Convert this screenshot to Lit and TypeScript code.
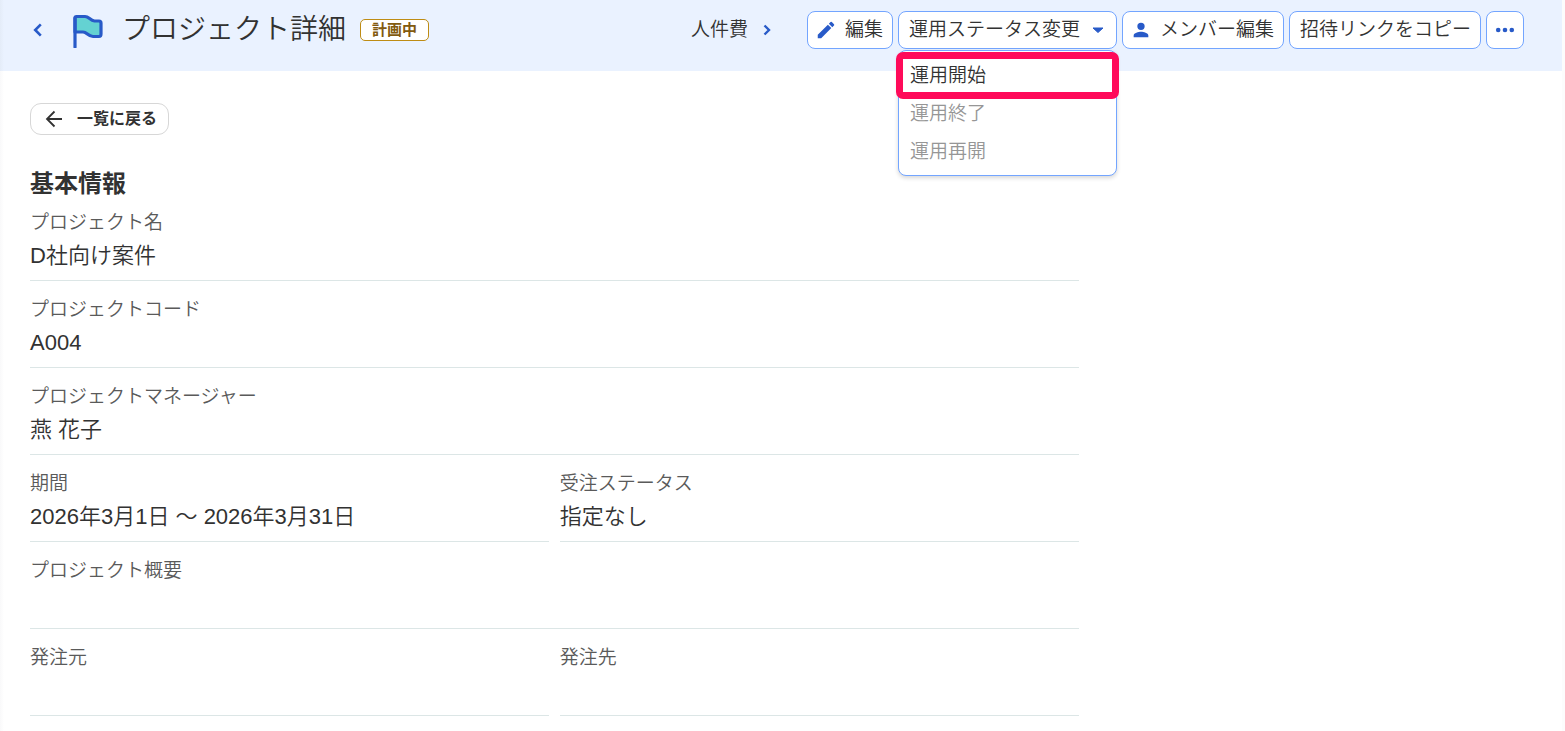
import { LitElement, html, css, svg, nothing } from "lit";
import { customElement, state } from "lit/decorators.js";

interface Field {
  label: string;
  value: string;
  half?: boolean;
}

const FIELDS: Field[] = [
  { label: "プロジェクト名", value: "D社向け案件" },
  { label: "プロジェクトコード", value: "A004" },
  { label: "プロジェクトマネージャー", value: "燕 花子" },
  { label: "期間", value: "2026年3月1日 ～ 2026年3月31日", half: true },
  { label: "受注ステータス", value: "指定なし", half: true },
  { label: "プロジェクト概要", value: "" },
  { label: "発注元", value: "", half: true },
  { label: "発注先", value: "", half: true },
];

const ACTIONS = [
  { label: "運用開始", enabled: true },
  { label: "運用終了", enabled: false },
  { label: "運用再開", enabled: false },
];

const pencil = svg`<path fill="currentColor" d="M3 17.25V21h3.75L17.81 9.94l-3.75-3.75L3 17.25zM20.71 7.04a1 1 0 0 0 0-1.41l-2.34-2.34a1 1 0 0 0-1.41 0l-1.83 1.83 3.75 3.75 1.83-1.83z"/>`;
const person = svg`<path fill="currentColor" d="M12 12a4 4 0 1 0 0-8 4 4 0 0 0 0 8zm0 2c-2.67 0-8 1.34-8 4v2h16v-2c0-2.66-5.33-4-8-4z"/>`;

@customElement("app-root")
export class AppRoot extends LitElement {
  @state() private menuOpen = true;

  static styles = css`
    :host {
      display: block;
      min-height: 100vh;
      box-sizing: border-box;
      padding-right: 3px;
      background: linear-gradient(to right, #f9f9fa, #fff 4px, #fff calc(100% - 3px), #fcfcfc calc(100% - 3px));
      color: #323232;
      font-family: "Liberation Sans", "Noto Sans CJK JP", sans-serif;
      font-size: 19px;
      line-height: 28px;
      font-weight: 350;
    }
    * {
      box-sizing: border-box;
    }
    button {
      font: inherit;
      color: inherit;
      margin: 0;
      cursor: pointer;
      white-space: nowrap;
    }
    svg {
      display: block;
      flex: none;
    }
    .header {
      display: flex;
      align-items: flex-start;
      height: 71px;
      padding: 11px 38px 0 30px;
      background: linear-gradient(to right, #e4ecf8, #eaf2ff 4px);
    }
    .brand {
      display: flex;
      align-items: center;
      height: 38px;
    }
    .collapse {
      display: flex;
      padding: 0;
      border: 0;
      background: none;
      color: #285ac8;
    }
    .flag {
      margin-left: 24px;
    }
    .title {
      margin: 0 0 0 16px;
      font-size: 28px;
      line-height: 38px;
      font-weight: 350;
      white-space: nowrap;
    }
    .badge {
      height: 22px;
      margin-left: 14px;
      padding: 0 11px;
      border: 1px solid #be8c14;
      border-radius: 5px;
      background: #fff;
      color: #825a0f;
      font-size: 15px;
      line-height: 20px;
      font-weight: 700;
      white-space: nowrap;
    }
    .actions {
      display: flex;
      align-items: center;
      gap: 5px;
      margin-left: auto;
    }
    .next {
      display: flex;
      align-items: center;
      gap: 7px;
      margin-right: 23px;
      color: inherit;
      text-decoration: none;
      white-space: nowrap;
    }
    .next svg {
      color: #285ac8;
    }
    .btn {
      display: flex;
      align-items: center;
      height: 38px;
      padding: 0 9px 0 10px;
      border: 1px solid #73a5ff;
      border-radius: 8px;
      background: #fff;
      line-height: 36px;
    }
    .btn svg {
      color: #285ac8;
    }
    .btn.icon {
      gap: 8px;
      padding: 0 9px 0 7px;
    }
    .btn.drop {
      gap: 8px;
      padding: 0 8px 0 10px;
    }
    .btn.more {
      width: 38px;
      padding: 0;
      justify-content: center;
    }
    .dropdown {
      position: relative;
    }
    .menu {
      position: absolute;
      top: 39px;
      left: 0;
      right: 0;
      margin: 0;
      padding: 6px 0 4px;
      list-style: none;
      border: 1px solid #73a5ff;
      border-radius: 8px;
      background: #fff;
      box-shadow: 0 2px 4px rgba(0, 0, 0, 0.16);
    }
    .entry {
      display: block;
      width: 100%;
      height: 38px;
      padding: 0 11px;
      border: 0;
      background: none;
      text-align: left;
    }
    .entry:disabled {
      color: #969696;
      cursor: default;
    }
    .mark {
      position: absolute;
      top: 41px;
      left: -2px;
      right: -2px;
      height: 47px;
      border: 7px solid #ff0a5a;
      border-radius: 7px;
      pointer-events: none;
    }
    .content {
      padding: 32px 34px 0 30px;
    }
    .back {
      display: flex;
      align-items: center;
      gap: 11px;
      width: max-content;
      height: 32px;
      padding: 0 11px 0 13px;
      border: 1px solid #d7d7d7;
      border-radius: 11px;
      background: #fff;
      font-size: 16px;
      font-weight: 700;
      line-height: 28px;
    }
    .heading {
      margin: 31px 0 7px;
      font-size: 24px;
      line-height: 36px;
      font-weight: 700;
    }
    .fields {
      display: grid;
      grid-template-columns: 1fr 1fr;
      column-gap: 11px;
      row-gap: 15px;
      width: 70%;
      margin: 0;
    }
    .field {
      grid-column: span 2;
      padding-bottom: 5px;
      border-bottom: 1px solid #dce6e6;
    }
    .field.half {
      grid-column: span 1;
    }
    dt {
      color: #5a5a5a;
    }
    dd {
      margin: 0;
      height: 38px;
      font-size: 22px;
      line-height: 38px;
    }
  `;

  private toggle() {
    this.menuOpen = !this.menuOpen;
  }

  render() {
    return html`
      <header class="header">
        <div class="brand">
          <button class="collapse" aria-label="戻る">
            <svg width="16" height="16" viewBox="0 0 16 16" fill="none" stroke="currentColor" stroke-width="2.6"><path d="M10.8 2.4 5.200 8l5.600 5.600" /></svg>
          </button>
          <svg class="flag" width="36" height="36" viewBox="0 0 36 36" stroke="#285ac8" stroke-width="3.2" stroke-linecap="round" stroke-linejoin="round">
            <path fill="#64d2d2" d="M5 6q0-1.500 1.500-1.500H15c4 0 5 4 9.500 4.500H29q2 0 2 2v11q0 2.500-2 2.500h-6c-5 0-6-4.500-10-4.500H5z" />
            <path fill="none" d="M5 6V35" />
          </svg>
          <h1 class="title">プロジェクト詳細</h1>
          <span class="badge">計画中</span>
        </div>
        <nav class="actions">
          <a class="next" href="#labor">
            人件費
            <svg width="24" height="24" viewBox="0 0 24 24" fill="none" stroke="currentColor" stroke-width="2.4"><path d="m9.500 7.500 4.500 4.500-4.500 4.500" /></svg>
          </a>
          <button class="btn icon"><svg width="22" height="22" viewBox="0 0 24 24">${pencil}</svg>編集</button>
          <div class="dropdown">
            <button class="btn drop" aria-expanded=${this.menuOpen} @click=${this.toggle}>
              運用ステータス変更
              <svg width="20" height="20" viewBox="0 0 20 20"><path fill="currentColor" d="M5 8h10l-5 4.500z" stroke="currentColor" stroke-width="1" stroke-linejoin="round" /></svg>
            </button>
            ${this.menuOpen
              ? html`<ul class="menu">
                    ${ACTIONS.map((a) => html`<li><button class="entry" ?disabled=${!a.enabled}>${a.label}</button></li>`)}
                  </ul>
                  <div class="mark"></div>`
              : nothing}
          </div>
          <button class="btn icon"><svg width="22" height="22" viewBox="0 0 24 24">${person}</svg>メンバー編集</button>
          <button class="btn">招待リンクをコピー</button>
          <button class="btn more" aria-label="その他">
            <svg width="20" height="6" viewBox="0 0 20 6" fill="currentColor"><circle cx="3.200" cy="3" r="2.300" /><circle cx="10" cy="3" r="2.300" /><circle cx="16.800" cy="3" r="2.300" /></svg>
          </button>
        </nav>
      </header>
      <main class="content">
        <button class="back">
          <svg width="22" height="20" viewBox="0 0 22 20" fill="none" stroke="currentColor" stroke-width="1.800"><path d="M18 10H3M10.500 2.500 3 10l7.500 7.500" /></svg>
          一覧に戻る
        </button>
        <h2 class="heading">基本情報</h2>
        <dl class="fields">
          ${FIELDS.map(
            (f) => html`<div class="field ${f.half ? "half" : ""}">
              <dt>${f.label}</dt>
              <dd>${f.value}</dd>
            </div>`
          )}
        </dl>
      </main>
    `;
  }
}
